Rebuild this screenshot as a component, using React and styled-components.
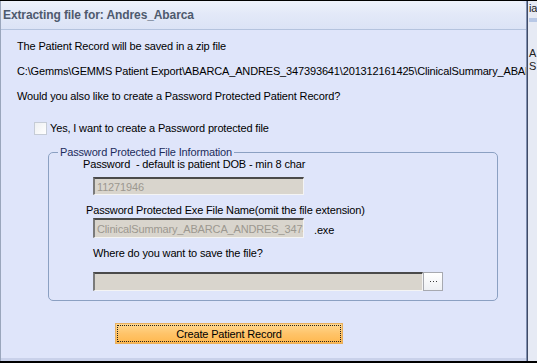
import React from "react";
import styled, { createGlobalStyle } from "styled-components";

const GlobalStyle = createGlobalStyle`
  html, body {
    margin: 0;
    padding: 0;
    overflow: hidden;
    background: #dfe5fa;
  }
`;

const Screen = styled.div`
  width: 537px;
  height: 363px;
  box-sizing: border-box;
  border-top: 1px solid #000;
  border-bottom: 2px solid #000;
  display: flex;
  font-family: "Liberation Sans", Arial, sans-serif;
  font-size: 11px;
  letter-spacing: -0.15px;
  color: #000;
  background: #dfe5fa;
`;

const Dialog = styled.div`
  width: 527px;
  flex: none;
  display: flex;
  flex-direction: column;
  border-left: 1px solid #9aa6bc;
  border-right: 1px solid #7f8fb0;
  box-sizing: border-box;
  overflow: hidden;
  background: #dfe5fa;
`;

const TitleBar = styled.div`
  height: 28px;
  flex: none;
  display: flex;
  align-items: center;
  padding-left: 2px;
  background: linear-gradient(#eef2fb, #e3e9f8 45%, #dbe3f6);
  border-bottom: 1px solid #b4c3de;
  border-top-right-radius: 6px;
  font-weight: bold;
  font-size: 12px;
  letter-spacing: -0.1px;
  color: #4e5a6e;
`;

const Body = styled.div`
  flex: 1;
  display: flex;
  flex-direction: column;
  padding: 10px 0 0 16px;
  border-bottom: 3px solid #c9d1ea;
`;

const Line = styled.div`
  height: 13px;
  line-height: 13px;
  white-space: nowrap;
  margin-top: ${(p) => p.$gap || 0}px;
`;

const CheckRow = styled.label`
  display: flex;
  align-items: center;
  gap: 3px;
  margin: 18px 0 0 17px;
  height: 14px;
`;

const Check = styled.span`
  width: 11px;
  height: 11px;
  border: 1px solid #c6ccd6;
  background: linear-gradient(135deg, #eef0f2, #ffffff);
`;

const Group = styled.fieldset`
  margin: 11px 0 0 31px;
  width: 450px;
  height: 155px;
  box-sizing: border-box;
  border: 1px solid #8ba0c2;
  border-radius: 5px;
  padding: 0;
  display: flex;
  flex-direction: column;
`;

const Legend = styled.legend`
  padding: 0 2px;
  margin-left: 9px;
  color: #1c2c5c;
  line-height: 12px;
`;

const FieldLabel = styled.div`
  line-height: 13px;
  margin: ${(p) => p.$top || 0}px 0 0 ${(p) => p.$left || 0}px;
  white-space: nowrap;
`;

const FieldRow = styled.div`
  display: flex;
  align-items: center;
  margin: ${(p) => p.$top || 0}px 0 0 44px;
`;

const Input = styled.div`
  width: ${(p) => p.$w}px;
  height: ${(p) => p.$h || 19}px;
  box-sizing: border-box;
  background: #d9d5cd;
  border-top: 2px solid #4a4a4a;
  border-left: 2px solid #7a7a7a;
  border-bottom: 1px solid #f4f4f4;
  border-right: 1px solid #f4f4f4;
  color: #9c9890;
  padding-left: 2px;
  display: flex;
  align-items: center;
  overflow: hidden;
  white-space: nowrap;
`;

const Ext = styled.span`
  margin-left: 10px;
  padding-top: 3px;
`;

const Browse = styled.div`
  width: 20px;
  height: 19px;
  box-sizing: border-box;
  border: 1px solid #a7a9b0;
  background: linear-gradient(#ffffff, #eef0f4);
  display: flex;
  align-items: center;
  justify-content: center;
  gap: 2px;
`;

const Dot = styled.span`
  width: 1px;
  height: 1px;
  background: #3a3a3a;
`;

const ButtonRow = styled.div`
  display: flex;
  margin: 22px 0 0 98px;
`;

const OrangeButton = styled.button`
  width: 228px;
  height: 21px;
  padding: 0;
  border: 1px solid #e8b060;
  background: linear-gradient(#ffd890, #ffc46a 50%, #ffb84e);
  font-family: inherit;
  font-size: 11px;
  letter-spacing: -0.15px;
  color: #000;
  position: relative;
  &::after {
    content: "";
    position: absolute;
    inset: 1px;
    border: 1px dotted #222;
  }
`;

const Sliver = styled.div`
  flex: 1;
  border-left: 1px solid #3f4a66;
  display: flex;
  flex-direction: column;
  font-size: 11px;
  color: #222;
  background: #e6eaf4;
  overflow: hidden;
  padding-left: 1px;
`;

const SliverText = styled.div`
  line-height: 12px;
  margin-top: ${(p) => p.$top || 0}px;
`;

const SliverBand = styled.div`
  height: 4px;
  margin-top: 4px;
  background: #b8c8e6;
`;

export default function App() {
  return (
    <>
      <GlobalStyle />
      <Screen>
        <Dialog>
          <TitleBar>Extracting file for: Andres_Abarca</TitleBar>
          <Body>
            <Line>The Patient Record will be saved in a zip file</Line>
            <Line $gap={12}>
              C:\Gemms\GEMMS Patient Export\ABARCA_ANDRES_347393641\201312161425\ClinicalSummary_ABARCA_ANDRES_347393641
            </Line>
            <Line $gap={12}>Would you also like to create a Password Protected Patient Record?</Line>
            <CheckRow>
              <Check />
              Yes, I want to create a Password protected file
            </CheckRow>
            <Group>
              <Legend>Password Protected File Information</Legend>
              <FieldLabel $left={34}>Password&nbsp; - default is patient DOB - min 8 char</FieldLabel>
              <FieldRow $top={6}>
                <Input $w={211} $h={18}>11271946</Input>
              </FieldRow>
              <FieldLabel $top={9} $left={37}>
                Password Protected Exe File Name(omit the file extension)
              </FieldLabel>
              <FieldRow $top={1}>
                <Input $w={211} $h={20}>ClinicalSummary_ABARCA_ANDRES_347393641</Input>
                <Ext>.exe</Ext>
              </FieldRow>
              <FieldLabel $top={9} $left={44}>Where do you want to save the file?</FieldLabel>
              <FieldRow $top={12}>
                <Input $w={330} />
                <Browse>
                  <Dot />
                  <Dot />
                  <Dot />
                </Browse>
              </FieldRow>
            </Group>
            <ButtonRow>
              <OrangeButton>Create Patient Record</OrangeButton>
            </ButtonRow>
          </Body>
        </Dialog>
        <Sliver>
          <SliverText $top={1}>ia</SliverText>
          <SliverBand />
          <SliverText $top={25}>A</SliverText>
          <SliverText $top={1}>S</SliverText>
        </Sliver>
      </Screen>
    </>
  );
}
